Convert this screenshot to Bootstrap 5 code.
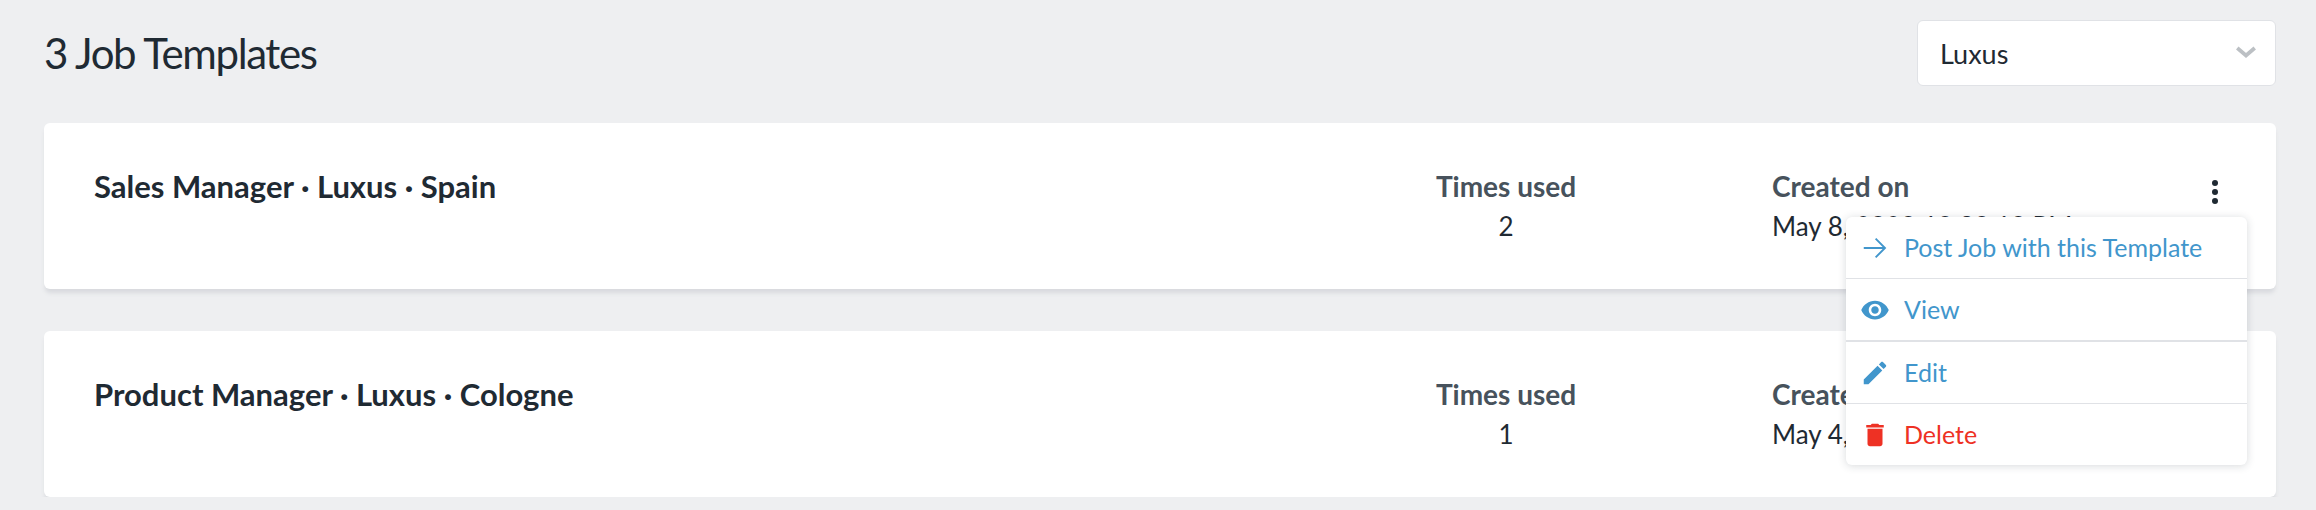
<!DOCTYPE html>
<html lang="en">
<head>
  <meta charset="UTF-8" />
  <title>Job Templates</title>
  <link href="https://cdn.jsdelivr.net/npm/bootstrap@5.3.0/dist/css/bootstrap.min.css" rel="stylesheet" />
  <style>
    body { background: #eeeff1; font-family: "Lato", "Noto Sans", sans-serif; color: #1f2a33; font-size: 26px; overflow: hidden; }
    .page-wrap { padding: 20px 40px 0 44px; }
    .page-head { margin-bottom: 37px; }
    .page-title { font-family: "Lato", sans-serif; font-weight: 400; font-size: 42px; letter-spacing: -1.4px; margin: 0; color: #1f2a33; }
    .team-select { width: 359px; height: 66px; font-size: 27px; color: #1f2a33; padding: 2px 22px 0; border-color: #e0e2e6; border-radius: 6px;
      background-size: 26px 20px; background-position: right 16px center;
      background-image: url("data:image/svg+xml,%3csvg xmlns='http://www.w3.org/2000/svg' viewBox='0 0 16 16'%3e%3cpath fill='none' stroke='%23bcc0c4' stroke-width='3' d='M1 4l7 6 7-6'/%3e%3c/svg%3e"); }
    .tpl-card { height: 166px; border: 0; border-radius: 6px; margin-bottom: 42px; box-shadow: 0 5px 4px -1px #d8dade; }
    .tpl-card:last-child { margin-bottom: 0; }
    .tpl-card .card-body { padding: 48px 46px 0 50px; }
    .tpl-title { font-size: 31px; font-weight: 700; line-height: 30px; margin: 0; }
    .stat-used { width: 200px; margin-right: 166px; text-align: center; }
    .stat-created { width: 428px; }
    .stat-label { font-weight: 700; color: #47525c; line-height: 30px; font-size: 28px; }
    .stat-value { line-height: 50px; font-size: 26px; }
    .kebab { width: 30px; height: 30px; }
    .row-menu { display: block; top: 46px; right: -17px; width: 401px; padding: 0; border: 0; border-radius: 6px; box-shadow: 0 1px 8px rgba(40, 50, 60, .18); font-size: 25px; }
    .row-menu .dropdown-item { display: flex; align-items: center; gap: 14px; height: 61px; padding: 0 14px; color: #4196cc; }
    .row-menu li + li { border-top: 1px solid #e0e2e6; }
    .row-menu li.thick { border-top-width: 2px; }
    .row-menu .dropdown-item.item-delete { color: #ee3124; }
    .row-menu svg { width: 30px; height: 30px; fill: currentColor; flex: none; }
  </style>
</head>
<body>
  <div class="page-wrap">
    <div class="page-head d-flex justify-content-between align-items-center">
      <h1 class="page-title">3 Job Templates</h1>
      <select class="form-select team-select"><option>Luxus</option></select>
    </div>

    <div class="card tpl-card">
      <div class="card-body d-flex align-items-start">
        <h2 class="tpl-title flex-grow-1">Sales Manager · Luxus · Spain</h2>
        <div class="stat-used">
          <div class="stat-label">Times used</div>
          <div class="stat-value">2</div>
        </div>
        <div class="stat-created">
          <div class="stat-label">Created on</div>
          <div class="stat-value">May 8, 2020 10:30:10 PM</div>
        </div>
        <div class="kebab position-relative">
          <svg viewBox="0 0 30 30" width="30" height="30" fill="#1f2a33"><circle cx="15" cy="5" r="3"/><circle cx="15" cy="14" r="3"/><circle cx="15" cy="23" r="3"/></svg>
          <ul class="dropdown-menu row-menu">
            <li><a class="dropdown-item" href="#"><svg viewBox="0 0 24 24"><path fill="none" stroke="currentColor" stroke-width="1.5" d="M3 12h17M12.500 4.500l7.500 7.500-7.500 7.500"/></svg>Post Job with this Template</a></li>
            <li><a class="dropdown-item" href="#"><svg viewBox="0 0 24 24"><path d="M12 4.500C7 4.500 2.730 7.610 1 12c1.730 4.390 6 7.500 11 7.500s9.270-3.110 11-7.500c-1.730-4.390-6-7.500-11-7.500zM12 17c-2.760 0-5-2.240-5-5s2.240-5 5-5 5 2.240 5 5-2.240 5-5 5zm0-8c-1.660 0-3 1.340-3 3s1.340 3 3 3 3-1.340 3-3-1.340-3-3-3z"/></svg>View</a></li>
            <li class="thick"><a class="dropdown-item" href="#"><svg viewBox="0 0 24 24"><path d="M3 17.250V21h3.750L17.810 9.940l-3.750-3.750L3 17.250zM20.710 7.040c.39-.39.39-1.020 0-1.410l-2.340-2.340c-.39-.39-1.020-.39-1.410 0l-1.830 1.830 3.750 3.750 1.830-1.830z"/></svg>Edit</a></li>
            <li><a class="dropdown-item item-delete" href="#"><svg viewBox="0 0 24 24"><path d="M6 19c0 1.100.9 2 2 2h8c1.100 0 2-.9 2-2V7H6v12zM19 4h-3.500l-1-1h-5l-1 1H5v2h14V4z"/></svg>Delete</a></li>
          </ul>
        </div>
      </div>
    </div>

    <div class="card tpl-card">
      <div class="card-body d-flex align-items-start">
        <h2 class="tpl-title flex-grow-1">Product Manager · Luxus · Cologne</h2>
        <div class="stat-used">
          <div class="stat-label">Times used</div>
          <div class="stat-value">1</div>
        </div>
        <div class="stat-created">
          <div class="stat-label">Created on</div>
          <div class="stat-value">May 4, 2020 11:02:45 AM</div>
        </div>
        <div class="kebab"></div>
      </div>
    </div>
  </div>
</body>
</html>
